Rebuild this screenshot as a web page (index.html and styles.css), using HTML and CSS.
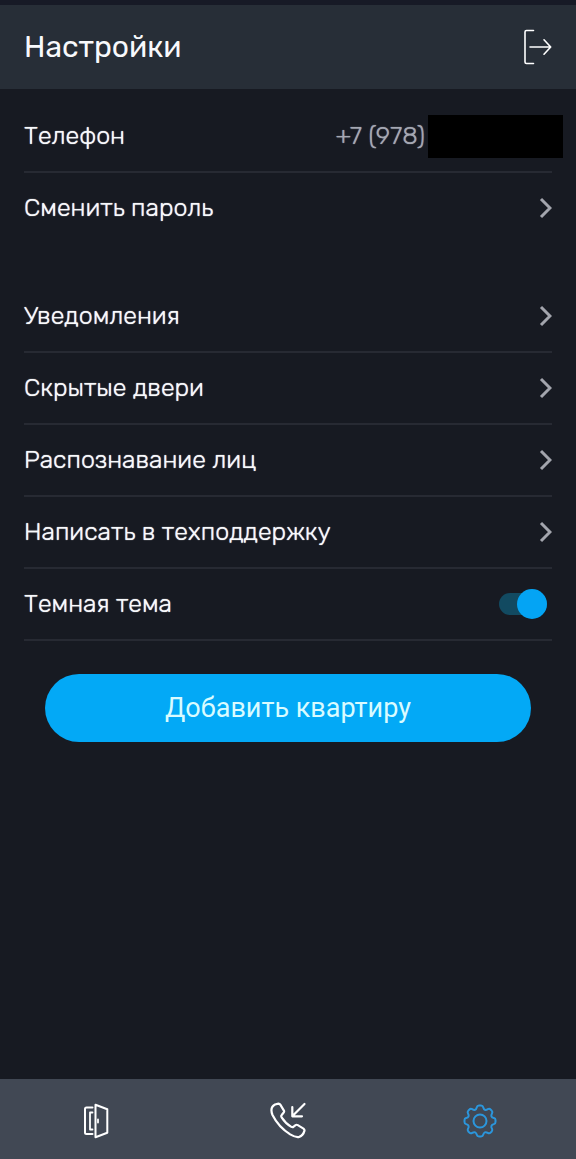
FILE: index.html
```html
<!DOCTYPE html>
<html lang="ru">
<head>
<meta charset="utf-8">
<meta name="viewport" content="width=device-width, initial-scale=1">
<title>Настройки</title>
<link rel="stylesheet" href="styles.css">
</head>
<body>
<div class="app">
  <header class="header">
    <h1 class="title">Настройки</h1>
    <button class="logout" type="button" aria-label="Выйти">
      <svg width="28" height="36" viewBox="0 0 28 36" fill="none" stroke="currentColor" stroke-width="1.6" stroke-linecap="round" stroke-linejoin="round"><path d="M9.500 1.500H2.500Q1 1.500 1 3v30q0 1.500 1.500 1.500h7M6 18h20.500M20 10.800l6.700 7.200-6.700 7.200"/></svg>
    </button>
  </header>
  <main class="content">
    <section class="group">
      <div class="row">
        <span>Телефон</span>
        <span class="phone">+7 (978)<span class="mask"></span></span>
      </div>
      <a class="row last" href="#password"><span>Сменить пароль</span>
        <svg class="chevron" width="13" height="22" viewBox="0 0 13 22"><path d="M2 2l9 9-9 9"/></svg></a>
    </section>
    <section class="group">
      <a class="row" href="#notifications"><span>Уведомления</span>
        <svg class="chevron" width="13" height="22" viewBox="0 0 13 22"><path d="M2 2l9 9-9 9"/></svg></a>
      <a class="row" href="#doors"><span>Скрытые двери</span>
        <svg class="chevron" width="13" height="22" viewBox="0 0 13 22"><path d="M2 2l9 9-9 9"/></svg></a>
      <a class="row" href="#faces"><span>Распознавание лиц</span>
        <svg class="chevron" width="13" height="22" viewBox="0 0 13 22"><path d="M2 2l9 9-9 9"/></svg></a>
      <a class="row" href="#support"><span>Написать в техподдержку</span>
        <svg class="chevron" width="13" height="22" viewBox="0 0 13 22"><path d="M2 2l9 9-9 9"/></svg></a>
      <div class="row">
        <label for="dark">Темная тема</label>
        <input class="switch" id="dark" type="checkbox" role="switch" checked>
      </div>
    </section>
    <button class="add" type="button">Добавить квартиру</button>
  </main>
  <nav class="tabs" aria-label="Разделы">
    <a class="tab" href="#home" aria-label="Двери">
      <svg width="26" height="36" viewBox="0 0 26 36" fill="none" stroke="currentColor" stroke-width="2" stroke-linejoin="round" stroke-linecap="round"><path d="M12.500 1.700v32.600l11.800-4.600V6.300z"/><path d="M9.500 4.500H3.500Q2 4.500 2 6v23.500Q2 31 3.500 31H9.500"/><path d="M9.500 9.500H7v17H9.500M15 16.500v3" stroke-width="1.800"/></svg>
    </a>
    <a class="tab" href="#calls" aria-label="Звонки">
      <svg width="38" height="38" viewBox="0 0 38 38" fill="none" stroke="currentColor" stroke-width="2.200" stroke-linejoin="round" stroke-linecap="round"><path d="M6 2.500l3.500-.9q1.200 0 1.800 1l3.600 6q.6 1.200-.4 2.200l-1.800 2.200q-1 1 .1 2.700 3.800 6 9.500 9.200 1.300.7 2.300-.3l2-1.500q1-.7 2.200 0l5.700 3.500q1.300.9.900 2.300-1.200 4.600-5.200 6-3.400.8-9-2.500Q9.500 25 3.500 13 .5 5.500 6 2.500z"/><path d="M35.500 2L23.500 14M23.300 5v9.300H33"/></svg>
    </a>
    <a class="tab active" href="#settings" aria-label="Настройки" aria-current="page">
      <svg width="34" height="34" viewBox="0 0 34 34" fill="none" stroke="currentColor" stroke-width="2" stroke-linejoin="round"><circle cx="17" cy="17" r="6.500"/><path d="M13.800 3.300Q14.200 1.500 16 1.500h2q1.800 0 2.200 1.800c.6 2.600 2.300 3.300 4.600 1.900q1.600-1 2.800.3l1.100 1.100q1.200 1.300.3 2.800c-1.400 2.300-.7 4 1.900 4.600q1.600.4 1.600 2v2q0 1.700-1.600 2.100c-2.600.6-3.300 2.300-1.900 4.600q.9 1.500-.3 2.800l-1.100 1.100q-1.200 1.300-2.800.3c-2.300-1.400-4-.7-4.600 1.900q-.4 1.700-2.200 1.700h-2q-1.800 0-2.200-1.700c-.6-2.600-2.300-3.300-4.600-1.900q-1.600 1-2.800-.3l-1.100-1.100q-1.200-1.300-.3-2.800c1.400-2.300.7-4-1.900-4.600q-1.600-.4-1.600-2.100v-2q0-1.600 1.600-2c2.600-.6 3.300-2.300 1.900-4.600q-.9-1.500.3-2.800l1.100-1.100q1.200-1.300 2.800-.3c2.300 1.400 4 .7 4.600-1.900z"/></svg>
    </a>
  </nav>
</div>
</body>
</html>
```
FILE: styles.css
```css
* { box-sizing: border-box; }

body {
  margin: 0;
  background: #171a22;
  color: #f8f9fc;
  font-family: Rubik, Roboto, sans-serif;
  font-size: 25px;
  font-weight: 300;
  line-height: 32px;
}

.app {
  display: flex;
  flex-direction: column;
  min-height: 100vh;
}

.header {
  display: flex;
  align-items: center;
  justify-content: space-between;
  height: 89px;
  padding: 0 24px;
  border-top: 5px solid #171a26;
  background: #272e37;
}

.title {
  margin: 0;
  font-size: 30px;
  font-weight: 400;
}

.logout {
  display: flex;
  padding: 0;
  border: 0;
  background: none;
  color: #fff;
}

.content {
  display: flex;
  flex: 1;
  flex-direction: column;
  padding: 12px 24px 34px;
}

.group + .group { margin-top: 36px; }

.row {
  display: flex;
  align-items: center;
  justify-content: space-between;
  height: 72px;
  border-bottom: 2px solid #272a33;
  color: inherit;
  text-decoration: none;
  text-shadow: 0 0 1px currentColor;
}

.last { border-bottom-color: transparent; }

.chevron {
  fill: none;
  stroke: #a3a5ad;
  stroke-width: 3;
}

.phone {
  display: flex;
  align-items: center;
  gap: 3px;
  margin-right: -11px;
  color: #a5a8b3;
}

.mask {
  width: 135px;
  height: 43px;
  background: #000;
}

.switch {
  display: flex;
  align-items: center;
  justify-content: flex-end;
  appearance: none;
  width: 48px;
  height: 22px;
  margin: 0 5px 0 0;
  border-radius: 11px;
  background: #124a61;
}

.switch::before {
  content: "";
  flex: none;
  width: 30px;
  height: 30px;
  border-radius: 50%;
  background: #04a4f4;
}

.switch:not(:checked) { justify-content: flex-start; }

.add {
  height: 68px;
  margin: 33px 21px 0;
  border: 0;
  border-radius: 34px;
  background: #03a9f6;
  color: #d9fbff;
  font-family: Roboto, sans-serif;
  font-size: 27px;
}

.tabs {
  display: grid;
  grid-template-columns: repeat(3, 1fr);
  height: 80px;
  background: #414854;
}

.tab {
  display: flex;
  align-items: center;
  justify-content: center;
  padding-top: 3px;
  color: #fff;
}

.active { color: #2b96dc; }
```
